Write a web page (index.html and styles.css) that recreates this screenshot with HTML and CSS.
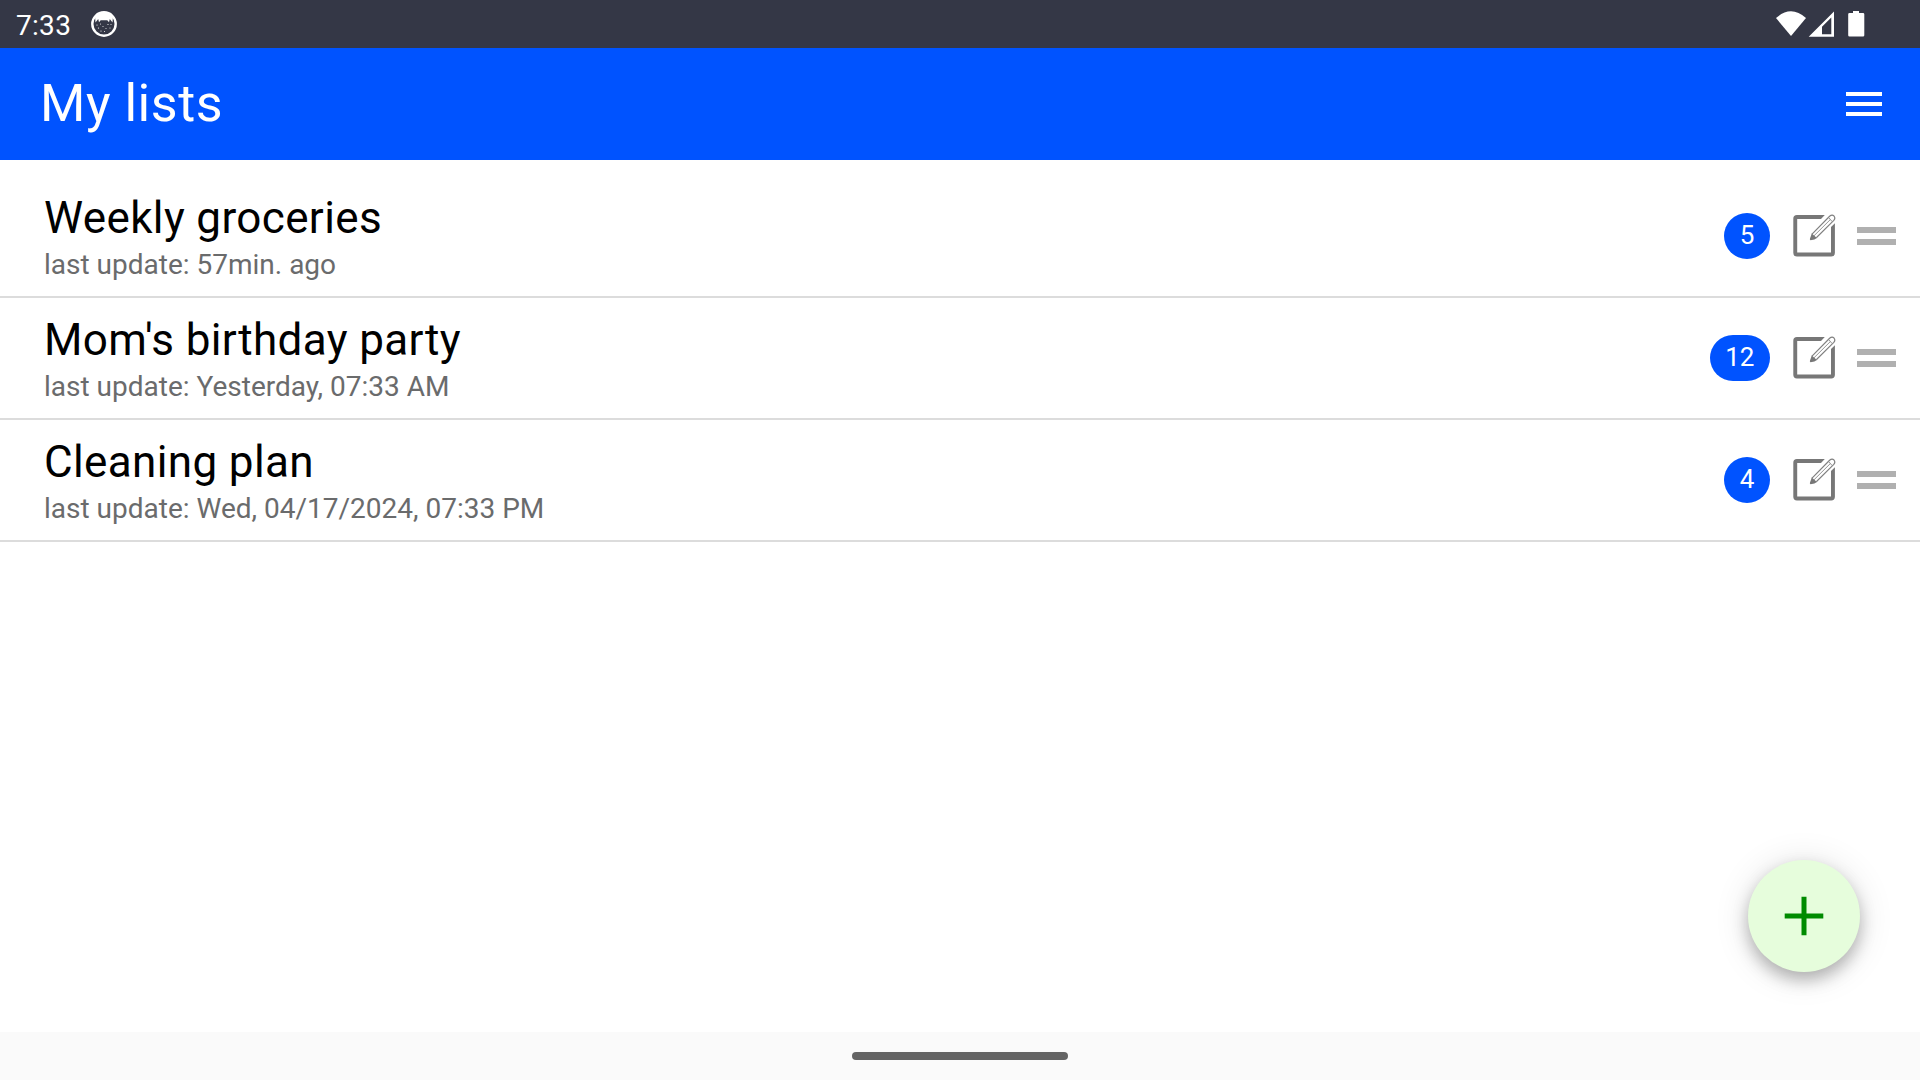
FILE: index.html
```html
<!DOCTYPE html>
<html lang="en">
<head>
<meta charset="utf-8">
<title>My lists</title>
<link rel="stylesheet" href="styles.css">
</head>
<body>
<svg class="sprite" aria-hidden="true">
  <symbol id="edit" viewBox="0 0 44 44">
    <path d="M32.800 1H5Q1.300 1 1.300 4.700V38.800Q1.300 42.500 5 42.500H39.200Q42.900 42.500 42.900 38.800V9.300L39 13.100V38.400H5.200V4.900H29Z" fill="#777"/>
    <path d="M19.800 20.300 37.600 2.300Q40 .3 42 2Q43.700 4.300 41.800 6.400L24.300 23.700" fill="#fff" stroke="#808080" stroke-width="1.200"/>
    <path d="M22 21.800 38.500 5.400M36.600 3.600 40.200 7.600" fill="none" stroke="#949494" stroke-width="1"/>
    <path d="M19.800 19.400 24.900 24 22.400 25.400 18.500 26.200Q17.500 26 18 24.600Z" fill="#777"/>
  </symbol>
</svg>
<div class="screen">
  <div class="status-bar">
    <span class="clock">7:33</span>
    <svg class="notification" width="26" height="26" viewBox="0 0 26 26">
      <circle cx="13" cy="13" r="11.700" fill="none" stroke="#fff" stroke-width="2.400"/>
      <path d="M4 5Q13-3 22 5L21.500 11.500 18.800 8 18 11.300 16.300 9.300H9.700L8 11.300 7.200 8 4.500 11.500Z" fill="#fff"/>
      <g fill="#fff"><circle cx="6" cy="14" r=".6"/><circle cx="9.500" cy="13" r=".5"/><circle cx="17" cy="13.500" r=".6"/><circle cx="20" cy="13.500" r=".5"/><circle cx="7.500" cy="17" r=".6"/><circle cx="12" cy="15.500" r=".5"/><circle cx="15" cy="17.500" r=".5"/><circle cx="19" cy="17" r=".5"/><circle cx="10" cy="20" r=".6"/><circle cx="13.500" cy="20.500" r=".5"/></g>
    </svg>
    <svg class="signals" width="90" height="28" viewBox="0 0 90 28">
      <path d="M0 8.100Q15-5.500 30 8.100L15 26Z" fill="#fff"/>
      <path fill-rule="evenodd" d="M32.700 26.700 58 1.500V26.700ZM46 16.800V24.300H55.300V7.500Z" fill="#fff"/>
      <path d="M77 1h6v2h4q1.300 0 1.300 1.300v20.900q0 1.300-1.300 1.300H73.500q-1.300 0-1.300-1.300V4.300q0-1.300 1.300-1.300H77Z" fill="#fff"/>
    </svg>
  </div>
  <header class="app-bar">
    <h1 class="title">My lists</h1>
    <div class="menu"><i></i><i></i><i></i></div>
  </header>
  <main class="lists">
    <div class="row">
      <div class="text"><div class="name">Weekly groceries</div><div class="updated">last update: 57min. ago</div></div>
      <span class="badge">5</span>
      <svg class="edit"><use href="#edit"/></svg>
      <div class="handle"><i></i><i></i></div>
    </div>
    <div class="row">
      <div class="text"><div class="name">Mom's birthday party</div><div class="updated">last update: Yesterday, 07:33 AM</div></div>
      <span class="badge">12</span>
      <svg class="edit"><use href="#edit"/></svg>
      <div class="handle"><i></i><i></i></div>
    </div>
    <div class="row">
      <div class="text"><div class="name">Cleaning plan</div><div class="updated">last update: Wed, 04/17/2024, 07:33 PM</div></div>
      <span class="badge">4</span>
      <svg class="edit"><use href="#edit"/></svg>
      <div class="handle"><i></i><i></i></div>
    </div>
  </main>
  <div class="nav-bar"><div class="pill"></div></div>
  <div class="fab"><svg width="40" height="40" viewBox="0 0 40 40"><path d="M20 .7V39.300M.7 20H39.300" stroke="#008b00" stroke-width="5"/></svg></div>
</div>
</body>
</html>
```
FILE: styles.css
```css
* { box-sizing: border-box; }
body { margin: 0; font-family: Roboto, "Noto Sans", sans-serif; }
.sprite { position: absolute; width: 0; height: 0; }
.screen {
  position: relative;
  display: flex;
  flex-direction: column;
  width: 1920px;
  height: 1080px;
  overflow: hidden;
  background: #fff;
}
.status-bar {
  display: flex;
  align-items: center;
  height: 48px;
  padding: 0 54px 0 16px;
  background: #343746;
  color: #fff;
}
.clock { width: 75px; font-size: 28px; line-height: 34px; padding-top: 4px; letter-spacing: .3px; }
.signals { margin-left: auto; }
.app-bar {
  display: flex;
  align-items: center;
  justify-content: space-between;
  height: 112px;
  padding: 0 38px 0 40px;
  background: #0053ff;
  color: #fff;
}
.title { margin: 0; font-size: 52px; font-weight: 400; line-height: 60px; letter-spacing: .52px; }
.menu { display: flex; flex-direction: column; gap: 6px; width: 36px; }
.menu i { height: 4px; background: #fff; }
.lists { flex: 1; padding-top: 16px; }
.row {
  display: flex;
  align-items: center;
  height: 122px;
  padding: 0 24px 0 44px;
  border-bottom: 2px solid #dcdcdc;
}
.text { flex: 1; padding-top: 1px; }
.name { font-size: 44px; line-height: 52px; letter-spacing: .37px; color: #000; }
.updated { margin-top: 4px; font-size: 28px; line-height: 34px; color: #6a6b6c; }
.badge {
  min-width: 46px;
  height: 46px;
  padding: 0 15.600px;
  border-radius: 23px;
  background: #0053ff;
  color: #fff;
  font-size: 26px;
  line-height: 44px;
  text-align: center;
}
.edit { width: 44px; height: 44px; margin: 0 20px 0 22px; }
.handle { display: flex; flex-direction: column; gap: 6px; width: 39px; margin-left: 1px; }
.handle i { height: 6px; background: #b0b0b0; }
.nav-bar {
  display: flex;
  align-items: center;
  justify-content: center;
  height: 48px;
  background: #fafafa;
}
.pill { width: 216px; height: 8px; border-radius: 4px; background: #646464; }
.fab {
  position: absolute;
  right: 60px;
  bottom: 108px;
  display: flex;
  align-items: center;
  justify-content: center;
  width: 112px;
  height: 112px;
  border-radius: 50%;
  background: #e6fddc;
  box-shadow: 0 8px 16px rgba(0, 0, 0, .26), 0 3px 36px rgba(0, 0, 0, .12);
}
```
